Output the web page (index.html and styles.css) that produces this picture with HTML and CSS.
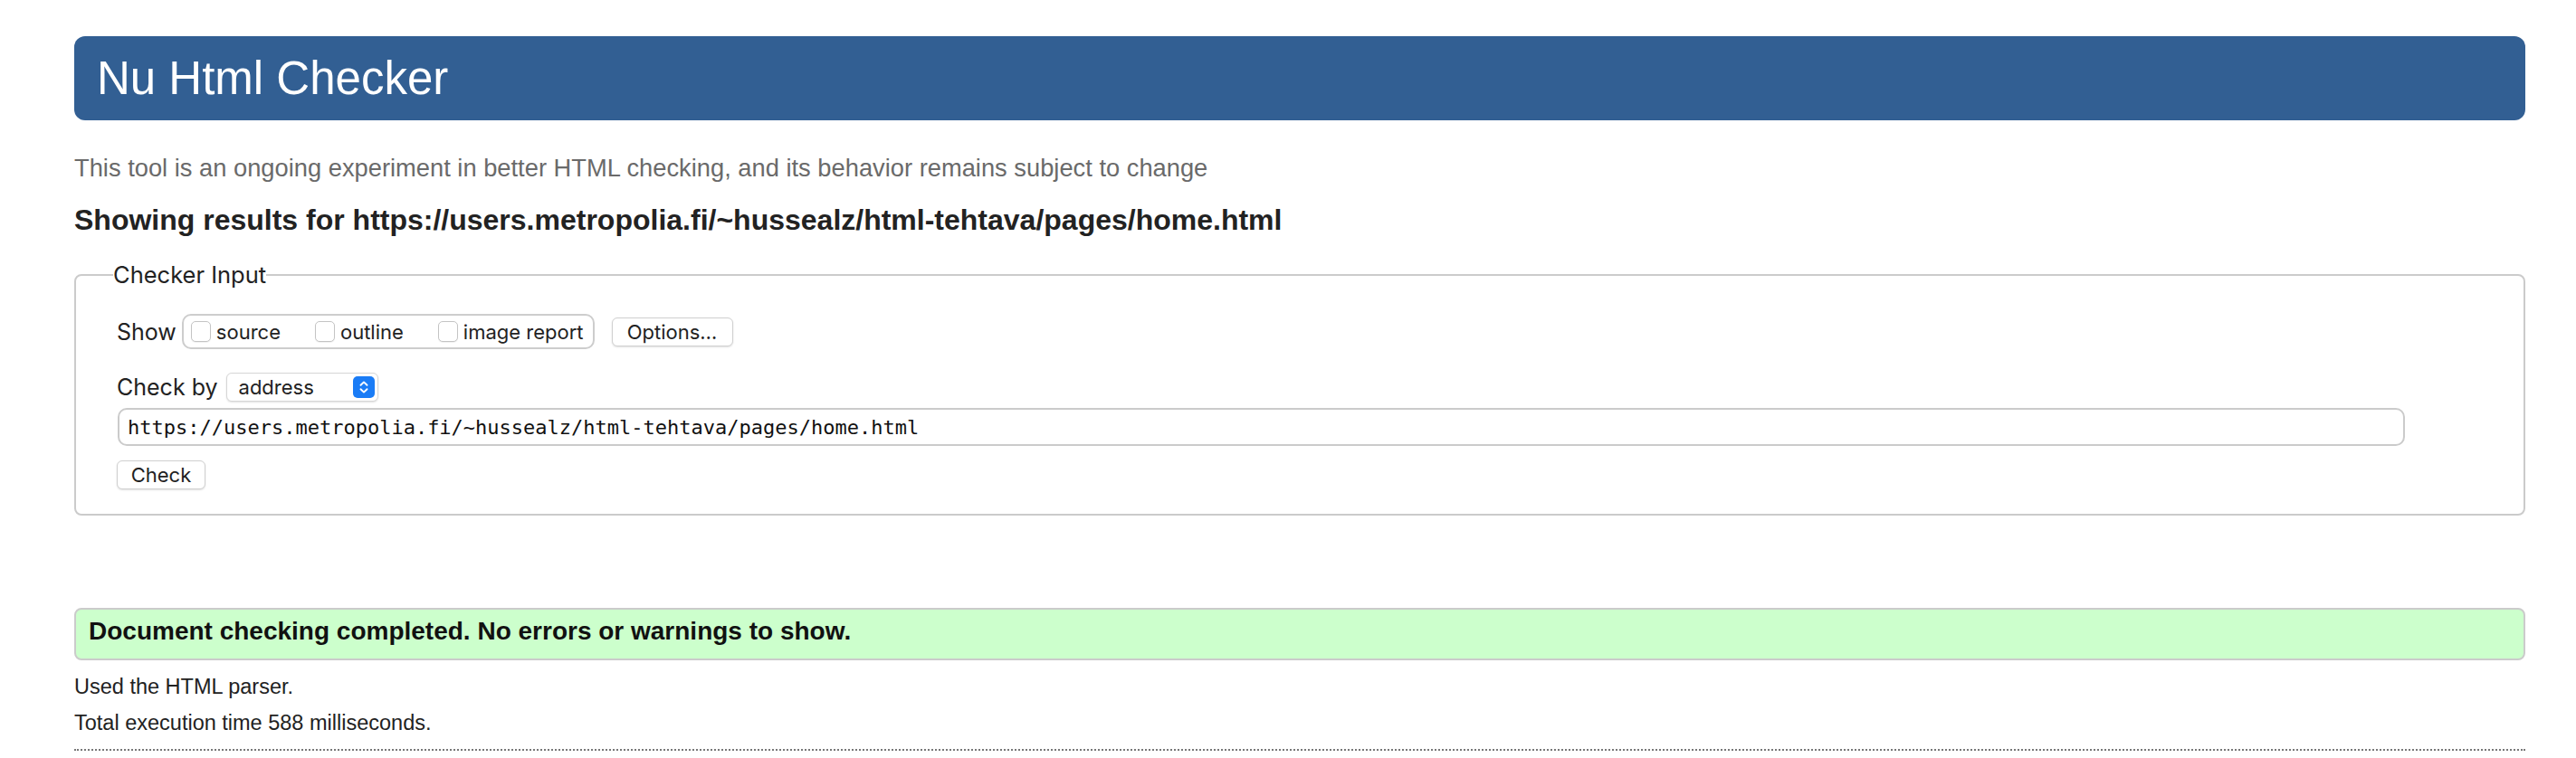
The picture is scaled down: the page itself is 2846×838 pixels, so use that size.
FILE: index.html
```html
<!DOCTYPE html>
<html lang="en">
<head>
<meta charset="utf-8">
<title>Nu Html Checker</title>
<link rel="stylesheet" href="styles.css">
</head>
<body>
<h1 class="title">Nu Html Checker</h1>
<p class="intro">This tool is an ongoing experiment in better HTML checking, and its behavior remains subject to change</p>
<p class="showing">Showing results for https://users.metropolia.fi/~hussealz/html-tehtava/pages/home.html</p>
<form class="checker">
  <fieldset class="fs">
    <legend class="legend">Checker Input</legend>
    <div class="row show-row">
      <span class="label">Show</span>
      <div class="group">
        <label class="opt"><input type="checkbox" class="cb">source</label>
        <label class="opt"><input type="checkbox" class="cb">outline</label>
        <label class="opt last"><input type="checkbox" class="cb">image report</label>
      </div>
      <button type="button" class="btn options">Options…</button>
    </div>
    <div class="row checkby-row">
      <span class="label">Check by</span>
      <div class="select-wrap">
        <select class="select"><option>address</option></select>
        <svg class="select-arrow" width="24" height="24" viewBox="0 0 24 24" aria-hidden="true">
          <rect x="0" y="0" width="24" height="24" rx="5" fill="#1a7cf6"/>
          <path d="M8.5 9.8 L12 6.4 L15.5 9.8" fill="none" stroke="#fff" stroke-width="1.9" stroke-linecap="round" stroke-linejoin="round"/>
          <path d="M8.5 14.2 L12 17.6 L15.5 14.2" fill="none" stroke="#fff" stroke-width="1.9" stroke-linecap="round" stroke-linejoin="round"/>
        </svg>
      </div>
    </div>
    <input class="url" type="text" value="https://users.metropolia.fi/~hussealz/html-tehtava/pages/home.html">
    <div class="row check-row">
      <button type="button" class="btn check">Check</button>
    </div>
  </fieldset>
</form>
<div class="success">Document checking completed. No errors or warnings to show.</div>
<p class="meta first">Used the HTML parser.</p>
<p class="meta">Total execution time 588 milliseconds.</p>
<hr class="dotted">
</body>
</html>
```

FILE: styles.css
```css
* { box-sizing: border-box; }
html { background: #fff; }
body {
  margin: 0;
  padding: 40px 56px 0 82px;
  font-family: "Liberation Sans", Arial, sans-serif;
  color: #222;
}
.title {
  margin: 0;
  height: 93px;
  padding-left: 25px;
  background: #325f93;
  border-radius: 12px;
  color: #fff;
  font-weight: normal;
  font-size: 51px;
  line-height: 93px;
}
.intro {
  margin: 38px 0 0;
  font-size: 27.3px;
  line-height: 30px;
  color: #6a6a6a;
}
.showing {
  margin: 24px 0 0;
  font-size: 32px;
  line-height: 36px;
  font-weight: bold;
  color: #222;
}
.checker { margin: 26px 0 0; }
.fs {
  margin: 0;
  min-width: 0;
  border: 2px solid #cbcbcb;
  border-radius: 8px;
  padding: 26px 132px 27px 45px;
}
.legend {
  margin-left: -4px;
  padding: 0;
  font-family: Inter, "Noto Sans", sans-serif;
  font-size: 25.5px;
  line-height: 34px;
  color: #222;
}
.row { display: flex; align-items: center; }
.label {
  font-family: Inter, "Noto Sans", sans-serif;
  font-size: 25px;
  color: #222;
}
.show-row { height: 39px; }
.show-row .label { margin-right: 6px; }
.group {
  display: flex;
  align-items: center;
  height: 39px;
  padding: 0 10px 0 8px;
  border: 2px solid #cdcdcd;
  border-radius: 10px;
}
.opt {
  display: flex;
  align-items: center;
  margin-right: 38px;
  font-family: Inter, "Noto Sans", sans-serif;
  font-size: 22px;
  color: #222;
}
.opt.last { margin-right: 0; }
.cb {
  appearance: none;
  -webkit-appearance: none;
  width: 22px;
  height: 23px;
  margin: 0 6px 0 0;
  border: 1.5px solid #c4c4c4;
  border-radius: 5px;
  background: #fff;
  box-shadow: 0 1px 1px rgba(0,0,0,0.06);
}
.btn {
  height: 32px;
  padding: 0 16px;
  border: 1px solid #d0d0d0;
  border-radius: 6px;
  background: #fff;
  box-shadow: 0 1px 2px rgba(0,0,0,0.12);
  font-family: Inter, "Noto Sans", sans-serif;
  font-size: 22px;
  color: #222;
}
.options { margin-left: 19px; width: 134px; padding: 0; }
.checkby-row { margin-top: 26px; height: 32px; }
.checkby-row .label { margin-right: 9px; }
.select-wrap { position: relative; width: 168px; height: 32px; }
.select {
  appearance: none;
  -webkit-appearance: none;
  width: 168px;
  height: 32px;
  padding: 0 0 0 13px;
  border: 1px solid #d6d6d6;
  border-radius: 6px;
  background: #fff;
  box-shadow: 0 1px 2px rgba(0,0,0,0.12);
  font-family: Inter, "Noto Sans", sans-serif;
  font-size: 22px;
  color: #222;
}
.select-arrow { position: absolute; top: 4px; right: 4px; }
.url {
  display: block;
  width: 100%;
  height: 42px;
  margin: 7px 0 0 1px;
  padding: 0 9px;
  border: 2px solid #cbcbcb;
  border-radius: 10px;
  background: #fff;
  font-family: "DejaVu Sans Mono", monospace;
  font-size: 22px;
  color: #111;
  outline: none;
}
.check-row { margin-top: 16px; }
.check { width: 98px; padding: 0; }
.success {
  margin-top: 102px;
  height: 58px;
  padding: 0 14px;
  border: 2px solid #cbcbcb;
  border-radius: 8px;
  background: #ccffcc;
  font-size: 28px;
  line-height: 48px;
  font-weight: bold;
  color: #111;
}
.meta {
  margin: 10px 0 0;
  font-size: 23.5px;
  line-height: 30px;
  color: #222;
}
.meta.first { margin-top: 14px; }
.dotted {
  margin: 14px 0 0;
  height: 0;
  border: 0;
  border-top: 2px dotted #777;
}
```
